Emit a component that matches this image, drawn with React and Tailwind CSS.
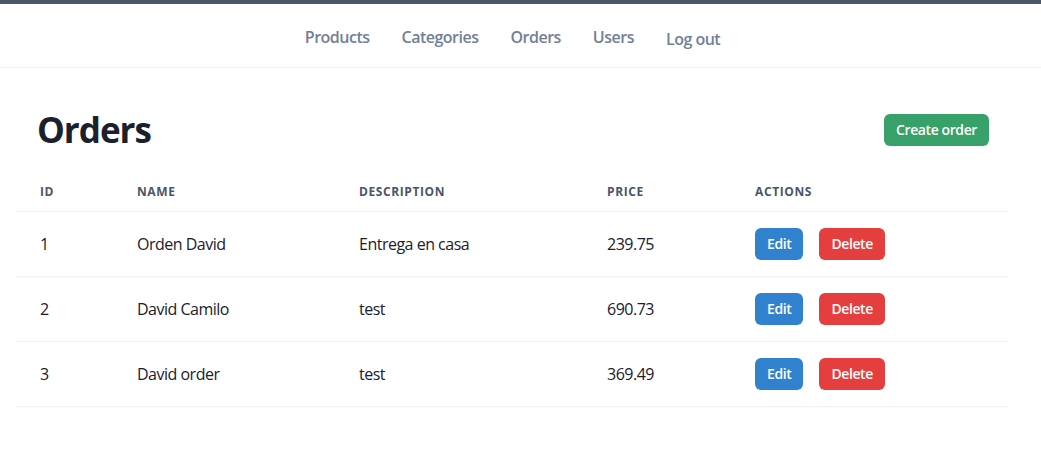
import React from 'react';

const orders = [
  { id: 1, name: 'Orden David', description: 'Entrega en casa', price: '239.75' },
  { id: 2, name: 'David Camilo', description: 'test', price: '690.73' },
  { id: 3, name: 'David order', description: 'test', price: '369.49' },
];

function App() {
  return (
    <div className="min-h-screen bg-white text-[#1a202c] font-['Segoe_UI','Open_Sans',sans-serif]">
      <div className="h-1 bg-[#4a5568]" />
      <nav className="h-16 border-b border-[#edf2f7] flex items-center justify-center gap-8 pr-4 text-[#718096] font-semibold text-base tracking-[-0.5px] pt-[2px]">
        <a className="cursor-pointer">Products</a>
        <a className="cursor-pointer">Categories</a>
        <a className="cursor-pointer">Orders</a>
        <a className="cursor-pointer">Users</a>
        <button className="pt-1 font-semibold tracking-[-0.5px]">Log out</button>
      </nav>

      <main className="px-4 pt-[41px]">
        <div className="flex items-center justify-between pl-[21px] pr-[36px]">
          <h1 className="text-[35px] font-bold leading-[1.2] tracking-[-1px]">Orders</h1>
          <button className="h-8 px-3 rounded-md bg-[#38a169] text-white text-sm font-semibold tracking-[-0.4px]">
            Create order
          </button>
        </div>

        <table className="mt-[20px] w-[992px] text-left border-collapse">
          <thead>
            <tr className="border-b border-[#edf2f7]">
              <th className="w-[97px] px-6 pt-[13px] pb-[11px] text-xs font-bold uppercase tracking-wider text-[#4a5568]">ID</th>
              <th className="w-[222px] px-6 pt-[13px] pb-[11px] text-xs font-bold uppercase tracking-wider text-[#4a5568]">Name</th>
              <th className="w-[248px] px-6 pt-[13px] pb-[11px] text-xs font-bold uppercase tracking-wider text-[#4a5568]">Description</th>
              <th className="w-[148px] px-6 pt-[13px] pb-[11px] text-xs font-bold uppercase tracking-wider text-[#4a5568]">Price</th>
              <th className="px-6 pt-[13px] pb-[11px] text-xs font-bold uppercase tracking-wider text-[#4a5568]">Actions</th>
            </tr>
          </thead>
          <tbody>
            {orders.map((o) => (
              <tr key={o.id} className="border-b border-[#edf2f7] h-[65px] tracking-[-0.5px]">
                <td className="px-6">{o.id}</td>
                <td className="px-6">{o.name}</td>
                <td className="px-6">{o.description}</td>
                <td className="px-6">{o.price}</td>
                <td className="px-6">
                  <div className="flex gap-4">
                    <button className="h-8 px-3 rounded-md bg-[#3182ce] text-white text-sm font-semibold tracking-[-0.4px]">Edit</button>
                    <button className="h-8 px-3 rounded-md bg-[#e53e3e] text-white text-sm font-semibold tracking-[-0.4px]">Delete</button>
                  </div>
                </td>
              </tr>
            ))}
          </tbody>
        </table>
      </main>
    </div>
  );
}

export default App;
